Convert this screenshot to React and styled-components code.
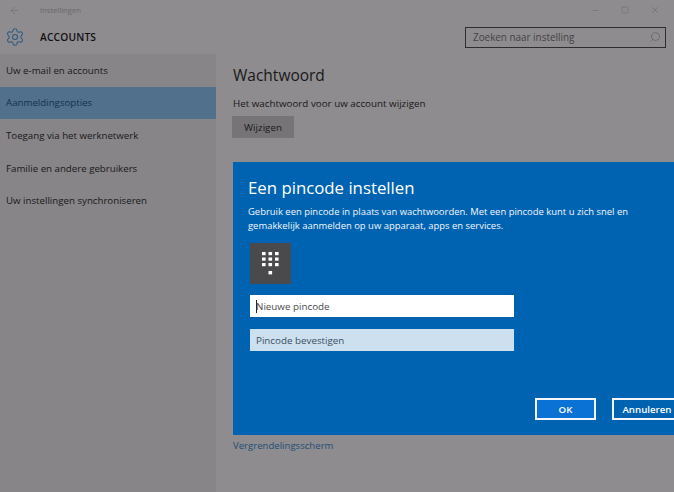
import React from "react";
import styled, { createGlobalStyle } from "styled-components";
import { ArrowLeft, Settings, Minus, Square, X, Search } from "lucide-react";

const Global = createGlobalStyle`
  html, body { margin: 0; padding: 0; background: #8e8c8e; overflow: hidden; }
  * { box-sizing: border-box; }
`;
const Page = styled.div`
  position: relative; width: 674px; height: 492px; overflow: hidden;
  font-family: "Open Sans", "Noto Sans", sans-serif; color: #1d1c1f; background: #8e8c8e;
  display: flex; flex-direction: column;
`;
const TitleBar = styled.div`
  height: 20px; display: flex; align-items: center; color: #666467; flex: none;
`;
const Back = styled.div`
  width: 40px; padding-left: 9px; display: flex; align-items: center;
`;
const TitleText = styled.span`font-size: 7.6px; color: #6a686b;`;
const WinControls = styled.div`
  margin-left: auto; display: flex; align-items: center; gap: 21px; padding-right: 14px; color: #5c5a5d;
`;
const Header = styled.div`
  height: 34px; flex: none; display: flex; align-items: center; background: #8e8c8e;
`;
const GearWrap = styled.div`
  width: 40px; padding-left: 5px; display: flex; align-items: center; color: #2c5a84;
`;
const Heading = styled.h1`
  margin: 0; font-size: 10.2px; font-weight: 600; letter-spacing: .2px; color: #111013;
`;
const SearchBox = styled.div`
  margin-left: auto; margin-right: 8px; width: 201px; height: 21px; border: 1px solid #2e2d30;
  display: flex; align-items: center; justify-content: space-between; padding: 0 4px 0 7px;
  font-size: 9.9px; color: #444346;
`;
const Body = styled.div`flex: 1; display: flex; min-height: 0;`;
const Sidebar = styled.nav`
  width: 216px; flex: none; background: #878587; display: flex; flex-direction: column;
`;
const NavItem = styled.div`
  height: 32.6px; display: flex; align-items: center; padding-left: 6px; font-size: 9.7px;
  color: ${p => (p.$active ? "#123250" : "#19181b")};
  background: ${p => (p.$active ? "#50708c" : "transparent")};
`;
const Content = styled.main`
  flex: 1; padding: 10px 0 0 17px; position: relative; display: flex; flex-direction: column; align-items: flex-start;
`;
const SectionTitle = styled.h2`
  margin: 0; font-size: 15.5px; font-weight: 400; color: #19181b; line-height: 22px;
`;
const Para = styled.p`
  margin: 11px 0 0; font-size: 9.8px; line-height: 14px; color: #19181b;
`;
const GrayButton = styled.div`
  margin: 5px 0 0 -1px; width: 62px; height: 22px; background: #767477; display: flex; align-items: center; justify-content: center;
  font-size: 9.8px; color: #19181b;
`;
const LockLink = styled.div`
  margin-top: 301px; font-size: 9.6px; line-height: 14px; color: #234f78;
`;
const Dialog = styled.section`
  position: absolute; left: 233px; top: 162px; width: 441px; height: 273px; background: #0063b1; color: #fff;
  padding: 13px 0 0 15px; display: flex; flex-direction: column; align-items: flex-start;
`;
const DialogTitle = styled.h2`
  margin: 0; font-size: 16.8px; font-weight: 400; line-height: 25px; color: #fff;
`;
const DialogText = styled.p`
  margin: 5px 0 0; width: 400px; font-size: 9.45px; line-height: 14px; color: #f2f7fb;
`;
const PinIcon = styled.div`
  margin: 10px 0 0 2px; width: 41px; height: 41px; background: #4a4a4c; display: flex; align-items: center; justify-content: center;
`;
const PinInput = styled.div`
  margin: ${p => p.$mt}px 0 0 2px; width: 264px; height: 22px; padding-left: 6px; display: flex; align-items: center;
  font-size: 9.8px; color: ${p => (p.$dim ? "#3a4e62" : "#4a4a4f")};
  background: ${p => (p.$dim ? "#cce0f0" : "#fff")};
`;
const Caret = styled.span`
  width: 1px; height: 13px; background: #222; margin-right: -1px;
`;
const Actions = styled.div`
  position: absolute; left: 302px; top: 236px; display: flex; gap: 16px;
`;
const DialogButton = styled.div`
  width: ${p => p.$w}px; height: 22px; flex: none; border: 2px solid #f0f6fb; display: flex; align-items: center; justify-content: center;
  font-size: 9.7px; font-weight: 600; color: #fff;
  background: ${p => (p.$primary ? "#0a72d4" : "#0063b1")};
`;

const dots = [[0,0],[1,0],[2,0],[0,1],[1,1],[2,1],[0,2],[1,2],[2,2]];

export default function App() {
  return (
    <Page>
      <Global />
      <TitleBar>
        <Back><ArrowLeft size={11} strokeWidth={1} /></Back>
        <TitleText>Instellingen</TitleText>
        <WinControls>
          <Minus size={9} strokeWidth={1} />
          <Square size={8} strokeWidth={1} />
          <X size={10} strokeWidth={1} />
        </WinControls>
      </TitleBar>
      <Header>
        <GearWrap><Settings size={20} strokeWidth={1.3} /></GearWrap>
        <Heading>ACCOUNTS</Heading>
        <SearchBox>
          Zoeken naar instelling
          <Search size={12} strokeWidth={1.3} color="#5f5d60" style={{ transform: "scaleX(-1)" }} />
        </SearchBox>
      </Header>
      <Body>
        <Sidebar>
          <NavItem>Uw e-mail en accounts</NavItem>
          <NavItem $active>Aanmeldingsopties</NavItem>
          <NavItem>Toegang via het werknetwerk</NavItem>
          <NavItem>Familie en andere gebruikers</NavItem>
          <NavItem>Uw instellingen synchroniseren</NavItem>
        </Sidebar>
        <Content>
          <SectionTitle>Wachtwoord</SectionTitle>
          <Para>Het wachtwoord voor uw account wijzigen</Para>
          <GrayButton>Wijzigen</GrayButton>
          <LockLink>Vergrendelingsscherm</LockLink>
        </Content>
      </Body>
      <Dialog>
        <DialogTitle>Een pincode instellen</DialogTitle>
        <DialogText>
          Gebruik een pincode in plaats van wachtwoorden. Met een pincode kunt u zich snel en gemakkelijk aanmelden op uw apparaat, apps en services.
        </DialogText>
        <PinIcon>
          <svg width="17" height="23" viewBox="0 0 17 23" fill="#fff">
            {dots.map(([x, y]) => <rect key={`${x}${y}`} x={x * 6.5} y={y * 5.5} width="3.6" height="3.2" />)}
            <rect x="6.5" y="19" width="3.6" height="3.4" />
          </svg>
        </PinIcon>
        <PinInput $mt={11}><Caret />Nieuwe pincode</PinInput>
        <PinInput $mt={12} $dim>Pincode bevestigen</PinInput>
        <Actions>
          <DialogButton $w={61} $primary>OK</DialogButton>
          <DialogButton $w={70}>Annuleren</DialogButton>
        </Actions>
      </Dialog>
    </Page>
  );
}
